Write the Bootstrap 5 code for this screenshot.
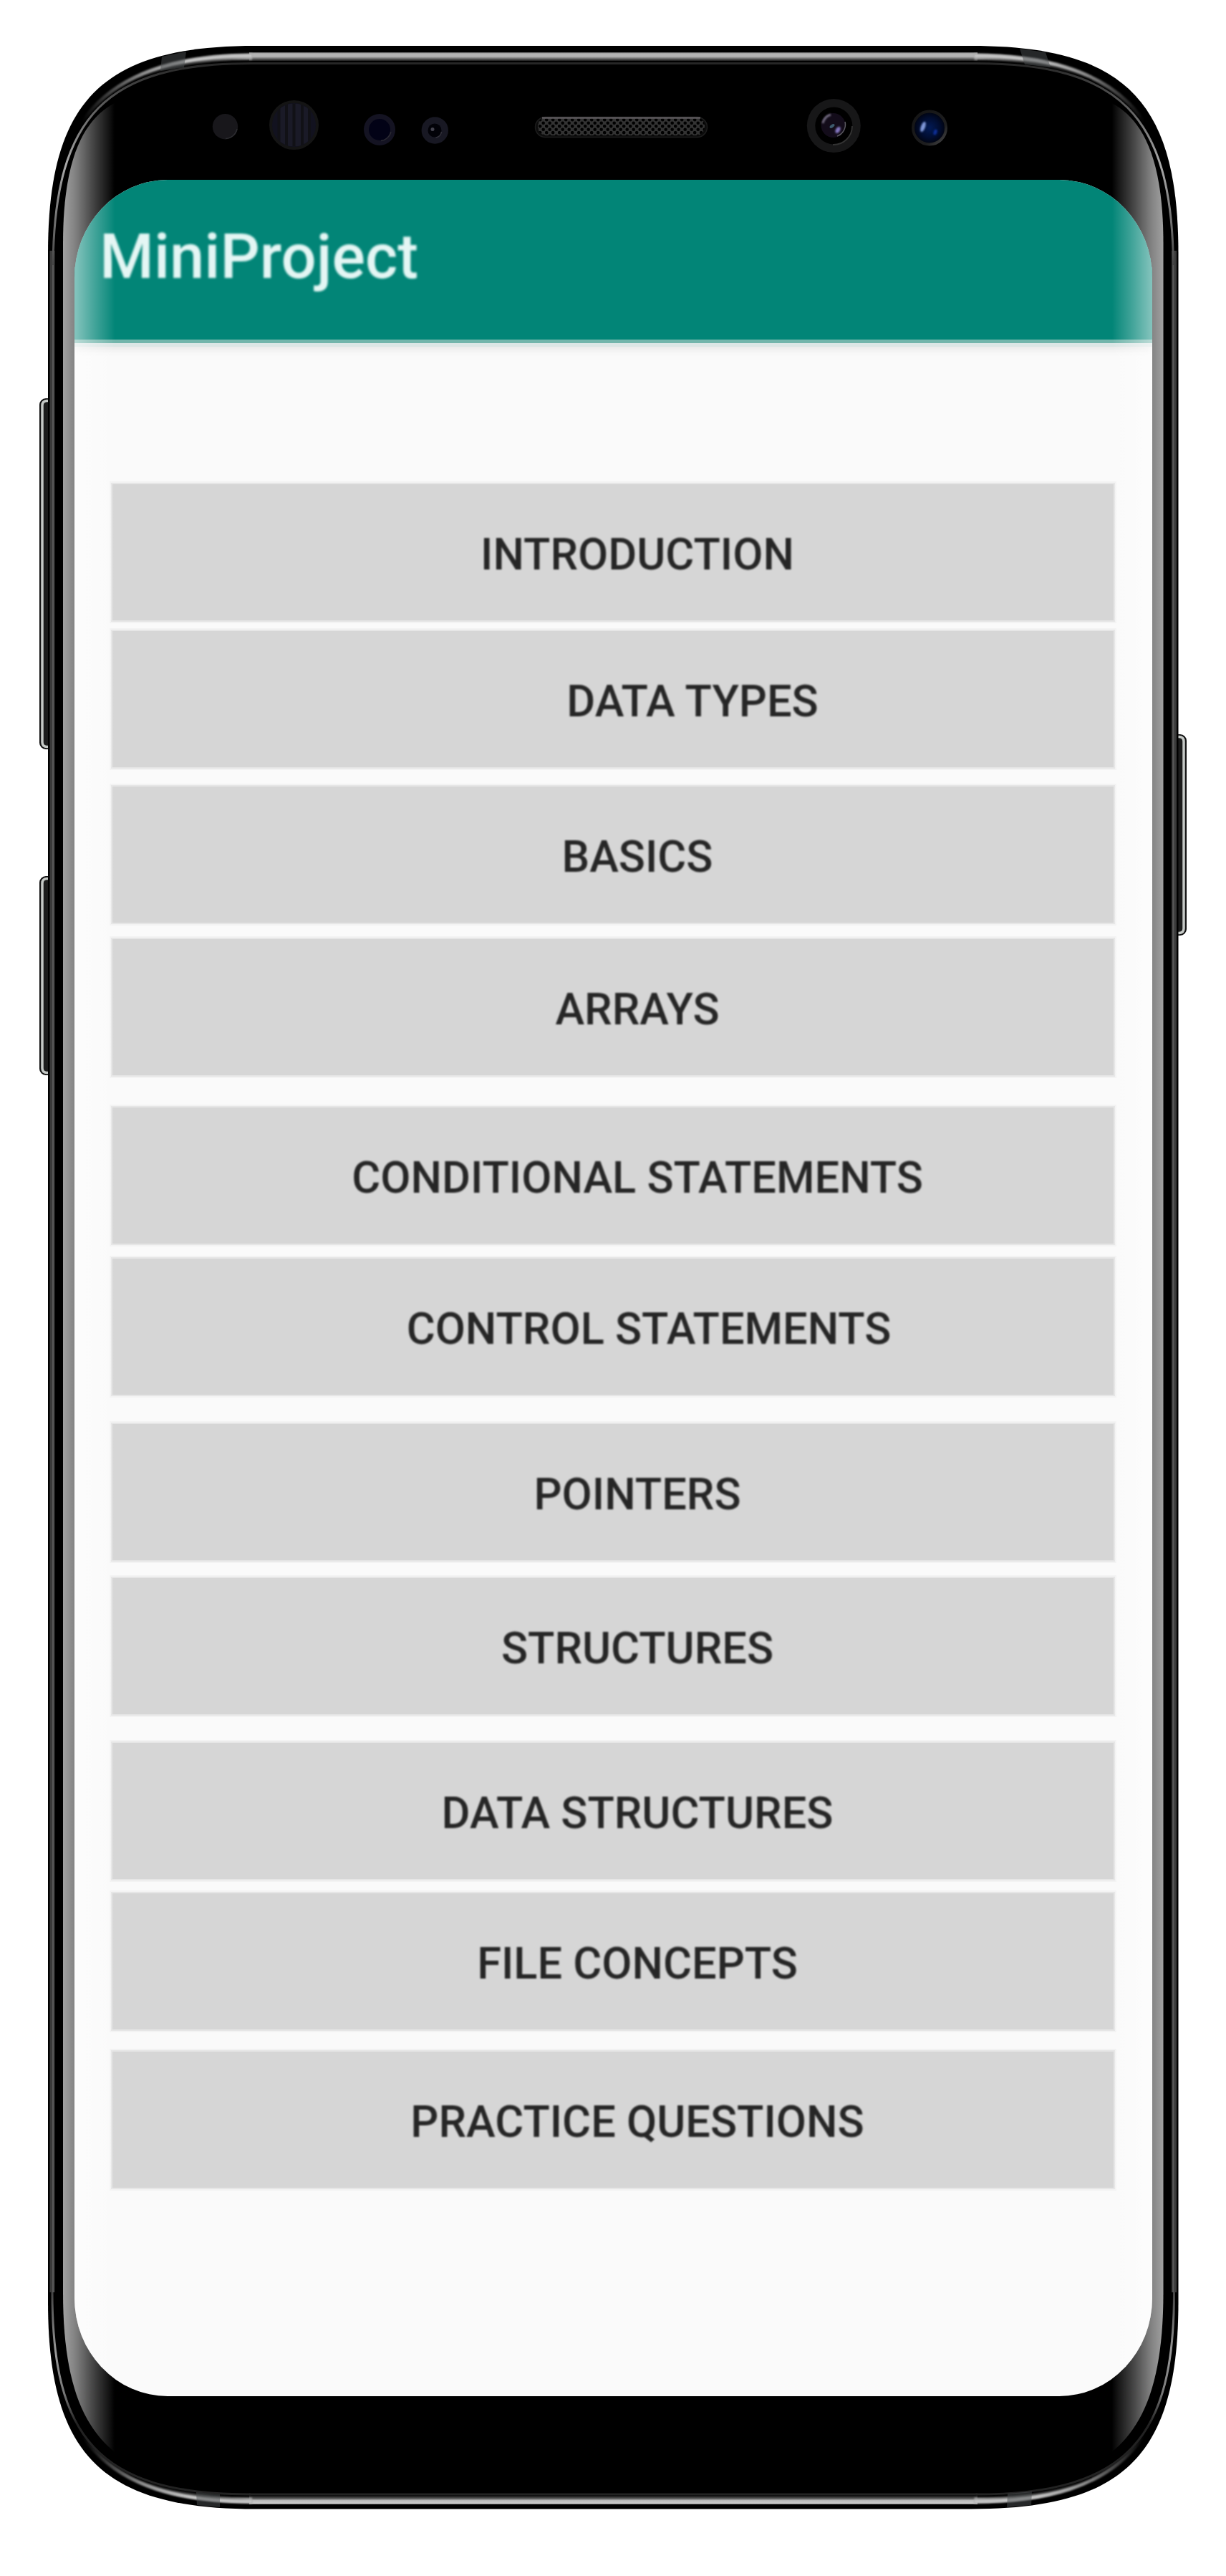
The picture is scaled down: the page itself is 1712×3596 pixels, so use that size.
<!DOCTYPE html>
<html lang="en">
<head>
<meta charset="utf-8">
<meta name="viewport" content="width=device-width, initial-scale=1">
<title>MiniProject</title>
<link rel="stylesheet" href="https://cdn.jsdelivr.net/npm/bootstrap@5.3.0/dist/css/bootstrap.min.css">
<style>
  body { background: #fff; font-family: Roboto, sans-serif; }
  .phone { width: 1712px; height: 3596px; padding: 251px 103.5px 0; }
  .phone-art { pointer-events: none; }
  .app-screen { height: 3094px; background: #fafafa; border-radius: 130px / 137px; }
  .app-bar {
    height: 223px; padding: 0 35.5px 8px; background: #028577;
    box-shadow: 0 5px 0 #72b5ab, 0 10px 0 #dbe6e5, 0 14px 10px rgba(0,0,0,.08);
  }
  .app-title { font-size: 86.800px; font-weight: 500; line-height: 1; color: #e4f6f4; filter: blur(1.4px); }
  .topic-list { padding: 202px 53.5px 0; }
  .topic {
    height: 190px; margin-bottom: 3px; padding: 8px 0 0 68px;
    border: 0; border-radius: 0; background: #d6d6d6; box-shadow: 0 0 0 2px #e6e6e6, 0 0 0 4px #f3f3f3;
    font-size: 61.300px; font-weight: 500; line-height: 1; color: #262626;
  }
  .topic span { filter: blur(1.3px); }
  .topic-inset { padding-left: 100px; }
  .topic-inset-lg { padding-left: 222px; }
  .gap-12 { margin-top: 12px; }
  .gap-17 { margin-top: 17.5px; }
  .gap-20 { margin-top: 20px; }
  .gap-21 { margin-top: 21.5px; }
  .gap-23 { margin-top: 23.5px; }
  .gap-27 { margin-top: 27.5px; }
  .gap-37 { margin-top: 37px; }
  .gap-38 { margin-top: 38.5px; }
  .gap-42 { margin-top: 42.5px; }
</style>
</head>
<body>
<main class="phone position-relative overflow-hidden">

  <!-- phone body, side keys and sensors -->
  <svg class="phone-art position-absolute top-0 start-0" width="1712" height="3596" viewBox="0 0 1712 3596" aria-hidden="true">
    <defs>
      <linearGradient id="band" x1="0" y1="0" x2="0" y2="1">
        <stop offset="0" stop-color="#555"/><stop offset=".15" stop-color="#b4b4b4"/><stop offset=".5" stop-color="#b4b4b4"/><stop offset=".8" stop-color="#555"/><stop offset="1" stop-color="#1a1a1a"/>
      </linearGradient>
      <linearGradient id="bandLow" x1="0" y1="1" x2="0" y2="0">
        <stop offset="0" stop-color="#555"/><stop offset=".12" stop-color="#ccc"/><stop offset=".45" stop-color="#bbb"/><stop offset=".7" stop-color="#555"/><stop offset="1" stop-color="#111"/>
      </linearGradient>
      <linearGradient id="shineTop" gradientUnits="userSpaceOnUse" x1="115" y1="0" x2="300" y2="0">
        <stop offset="0" stop-color="#bbb" stop-opacity="0"/><stop offset=".45" stop-color="#aaa" stop-opacity=".8"/><stop offset=".8" stop-color="#c4c4c4"/><stop offset="1" stop-color="#c4c4c4"/>
      </linearGradient>
      <linearGradient id="haloTop" gradientUnits="userSpaceOnUse" x1="190" y1="0" x2="352" y2="0">
        <stop offset="0" stop-color="#777" stop-opacity="0"/><stop offset="1" stop-color="#999"/>
      </linearGradient>
      <linearGradient id="innerTop" gradientUnits="userSpaceOnUse" x1="0" y1="89" x2="0" y2="370">
        <stop offset="0" stop-color="#262626"/><stop offset=".25" stop-color="#666"/><stop offset=".5" stop-color="#aaa"/><stop offset=".75" stop-color="#777"/><stop offset="1" stop-color="#444"/>
      </linearGradient>
      <linearGradient id="leftLow" gradientUnits="userSpaceOnUse" x1="0" y1="3200" x2="0" y2="3482">
        <stop offset="0" stop-color="#444"/><stop offset=".3" stop-color="#999"/><stop offset=".5" stop-color="#777"/><stop offset=".65" stop-color="#222"/><stop offset="1" stop-color="#222"/>
      </linearGradient>
      <linearGradient id="glare" gradientUnits="userSpaceOnUse" x1="88" y1="0" x2="160" y2="0">
        <stop offset="0" stop-color="#fff" stop-opacity=".63"/><stop offset=".25" stop-color="#fff" stop-opacity=".5"/><stop offset=".6" stop-color="#fff" stop-opacity=".26"/><stop offset=".9" stop-color="#fff" stop-opacity=".07"/><stop offset="1" stop-color="#fff" stop-opacity="0"/>
      </linearGradient>
      <radialGradient id="blueLens"><stop offset="0" stop-color="#021a55"/><stop offset=".6" stop-color="#010d30"/><stop offset="1" stop-color="#01030d"/></radialGradient>
      <linearGradient id="ringEdge" x1="0" y1="0" x2="1" y2="1"><stop offset="0" stop-color="#141414"/><stop offset=".7" stop-color="#1e1e1f"/><stop offset="1" stop-color="#4a4a4c"/></linearGradient>
      <pattern id="holes" width="9" height="9" patternUnits="userSpaceOnUse" x="752" y="165">
        <rect width="9" height="9" fill="#333"/><circle cx="2.2" cy="2.2" r="2.3" fill="#000"/><circle cx="6.7" cy="6.7" r="2.3" fill="#000"/>
      </pattern>
      <clipPath id="gridClip"><circle cx="410.500" cy="174.500" r="30"/></clipPath>
      <filter id="soft" x="-50%" y="-50%" width="200%" height="200%"><feGaussianBlur stdDeviation="1.2"/></filter>

      <g id="sideHalf" fill="none">
        <path d="M73 350V3200" stroke="#3a3a3a" stroke-width="7"/>
        <path d="M74 350V3200" stroke="#585858" stroke-width="2"/>
        <path d="M71 350C71 160 155 79 352 79" stroke="url(#haloTop)" stroke-width="9" filter="url(#soft)"/>
        <path d="M71 350C71 160 155 78 352 78" stroke="url(#shineTop)" stroke-width="5" filter="url(#soft)"/>
        <path d="M74 370C76 160 150 88.500 350 88.500" stroke="url(#innerTop)" stroke-width="3"/>
        <path d="M71 3200C71 3400 140 3490.500 352 3490.500" stroke="url(#haloTop)" stroke-width="8" filter="url(#soft)"/>
        <path d="M71 3200C71 3400 140 3492 352 3492" stroke="url(#shineTop)" stroke-width="5" filter="url(#soft)"/>
        <path d="M73 3200C73 3400 135 3482 350 3482" stroke="url(#leftLow)" stroke-width="3"/>
        <path d="M88 340C88 215 120 165 160 144V3423C118 3388 88 3330 88 3200Z" fill="url(#glare)"/>
      </g>
    </defs>

    <!-- volume and assistant keys -->
    <g stroke="#111" stroke-width="2">
      <rect x="56" y="557" width="26" height="488" rx="8" fill="#1c1c1c"/>
      <rect x="56" y="1224" width="26" height="276" rx="8" fill="#1c1c1c"/>
      <rect x="1630" y="1026" width="26" height="279" rx="8" fill="#1c1c1c"/>
    </g>
    <g fill="none" stroke="#c5c9c6" stroke-width="3.500">
      <path d="M68 559.500H65Q59 560 59 566V1036Q59 1042 65 1042.500H68"/>
      <path d="M68 1226.500H65Q59 1227 59 1233V1491Q59 1497 65 1497.500H68"/>
      <path d="M1644 1028.500H1647Q1653 1029 1653 1035V1296Q1653 1302 1647 1302.500H1644"/>
    </g>

    <path d="M67 354C67 140 143 64 357 64H1356C1570 64 1645.500 140 1645.500 354V3213C1645.500 3427 1570 3502.500 1356 3502.500H357C143 3502.500 67 3427 67 3213Z" fill="#000"/>
    <rect x="348" y="73" width="1017" height="12" fill="url(#band)"/>
    <rect x="348" y="87" width="1017" height="3" fill="#262626"/>
    <rect x="348" y="3484" width="1017" height="12" fill="url(#bandLow)"/>
    <rect x="348" y="3480.500" width="1017" height="3" fill="#232323"/>
    <use href="#sideHalf"/>
    <use href="#sideHalf" transform="translate(1712.500 0) scale(-1 1)"/>
    <!-- antenna breaks in the metal rim -->
    <g fill="#4a4d50" fill-opacity=".5">
      <path d="M226 79L260 72L257 94L224 99Z"/>
      <path d="M1424 68L1460 73L1467 94L1431 90Z"/>
      <path d="M274 3479L307 3482V3500L275 3497Z"/>
      <path d="M1441 3478L1407 3481L1406 3500L1440 3497Z"/>
    </g>

    <!-- sensors -->
    <circle cx="314.500" cy="176.700" r="17.700" fill="#18171b"/>
    <path d="M331 180a17 17 0 0 1-16 13.500" fill="none" stroke="#2d2d31" stroke-width="1.500"/>
    <circle cx="410.500" cy="174.500" r="32.500" fill="#12121f" stroke="#141414" stroke-width="4"/>
    <g clip-path="url(#gridClip)">
      <rect x="390" y="144" width="41" height="62" fill="#1a1a27"/>
      <path d="M389.500 144V206M400 144V206M410.500 144V206M422 144V206M432 144V206" stroke="#111116" stroke-width="4"/>
    </g>
    <circle cx="530" cy="181" r="22" fill="#141322"/>
    <circle cx="530" cy="181" r="15" fill="#020216"/>
    <path d="M546 184a16 16 0 0 1-14 12.500" fill="none" stroke="#2b2a33" stroke-width="1.500"/>
    <circle cx="607.300" cy="182" r="18.700" fill="#181823"/>
    <circle cx="607" cy="182" r="9.500" fill="#020208"/>
    <path d="M616.500 184a9.500 9.500 0 0 1-8 8" fill="none" stroke="#33323b" stroke-width="1.500"/>
    <circle cx="604" cy="180.500" r="2.500" fill="#44434e"/>

    <!-- earpiece -->
    <rect x="747.500" y="163.500" width="240" height="28" rx="14" fill="#0c0c0c" stroke="#1d1d1d" stroke-width="1.500"/>
    <rect x="751" y="164" width="233" height="25" rx="12" fill="url(#holes)"/>
    <path d="M757 164.500H978" stroke="#5c595c" stroke-width="2.500"/>

    <!-- cameras -->
    <circle cx="1164.300" cy="175.600" r="37.500" fill="#171718"/>
    <circle cx="1164.300" cy="175.600" r="26" fill="#000"/>
    <path d="M1190 176a26 26 0 0 1-27 26" fill="none" stroke="#333" stroke-width="1.800"/>
    <circle cx="1163.500" cy="175" r="17" fill="#130c1a"/>
    <path d="M1149 172a16 16 0 0 1 11-12" fill="none" stroke="#716a7e" stroke-width="3" filter="url(#soft)"/>
    <path d="M1180 170a17 17 0 0 1-11 20" fill="none" stroke="#5a5960" stroke-width="1.500"/>
    <ellipse cx="1170" cy="181.500" rx="3" ry="5" fill="#8376bf" transform="rotate(32 1170 181.500)" filter="url(#soft)"/>
    <ellipse cx="1162" cy="176" rx="2" ry="4" fill="#3d5a6d" transform="rotate(55 1162 176)"/>
    <circle cx="1298" cy="178.500" r="23" fill="url(#blueLens)" stroke="url(#ringEdge)" stroke-width="4"/>
    <ellipse cx="1289" cy="177" rx="3" ry="7.500" fill="#7f97d8" transform="rotate(20 1289 177)" filter="url(#soft)"/>
    <ellipse cx="1306" cy="184.500" rx="2.500" ry="4" fill="#0b2f96" transform="rotate(20 1306 184.500)" filter="url(#soft)"/>
  </svg>

  <section class="app-screen position-relative overflow-hidden">
    <header class="app-bar d-flex align-items-center">
      <h1 class="app-title mb-0">MiniProject</h1>
    </header>
    <nav class="topic-list d-flex flex-column">
      <button class="btn topic" type="button"><span class="d-inline-block">INTRODUCTION</span></button>
      <button class="btn topic topic-inset-lg gap-12" type="button"><span class="d-inline-block">DATA TYPES</span></button>
      <button class="btn topic gap-23" type="button"><span class="d-inline-block">BASICS</span></button>
      <button class="btn topic gap-20" type="button"><span class="d-inline-block">ARRAYS</span></button>
      <button class="btn topic gap-42" type="button"><span class="d-inline-block">CONDITIONAL STATEMENTS</span></button>
      <button class="btn topic topic-inset gap-17" type="button"><span class="d-inline-block">CONTROL STATEMENTS</span></button>
      <button class="btn topic gap-38" type="button"><span class="d-inline-block">POINTERS</span></button>
      <button class="btn topic gap-21" type="button"><span class="d-inline-block">STRUCTURES</span></button>
      <button class="btn topic gap-37" type="button"><span class="d-inline-block">DATA STRUCTURES</span></button>
      <button class="btn topic gap-17" type="button"><span class="d-inline-block">FILE CONCEPTS</span></button>
      <button class="btn topic gap-27" type="button"><span class="d-inline-block">PRACTICE QUESTIONS</span></button>
    </nav>
    <!-- curved glass reflections over both screen edges -->
    <svg class="phone-art position-absolute top-0 start-0" width="1505" height="3094" viewBox="103.500 251 1505 3094" aria-hidden="true">
      <rect x="103" y="251" width="57" height="3094" fill="url(#glare)"/>
      <rect x="103" y="251" width="57" height="3094" fill="url(#glare)" transform="translate(1712.500 0) scale(-1 1)"/>
    </svg>
  </section>
</main>
<script src="https://cdn.jsdelivr.net/npm/bootstrap@5.3.0/dist/js/bootstrap.bundle.min.js"></script>
</body>
</html>
